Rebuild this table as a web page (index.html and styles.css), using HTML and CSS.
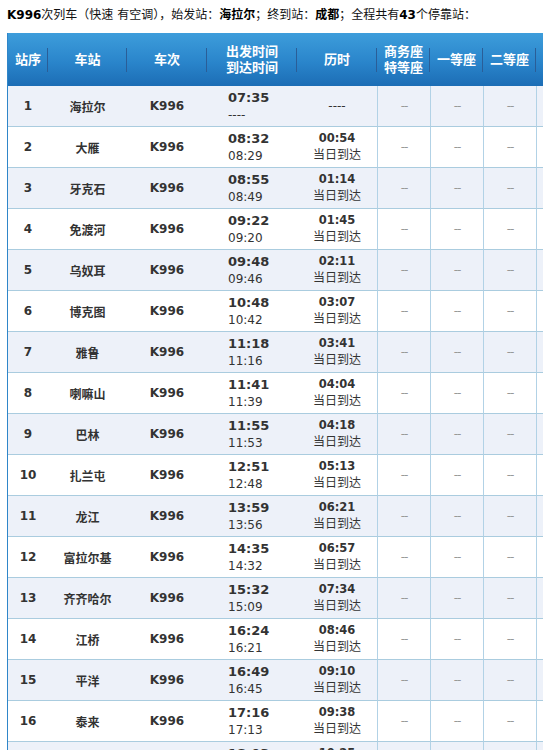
FILE: index.html
```html
<!DOCTYPE html>
<html lang="zh-CN">
<head>
<meta charset="utf-8">
<title>K996 时刻表</title>
<link rel="stylesheet" href="styles.css">
</head>
<body>
<div class="page">
  <p class="title"><b>K996</b>次列车（快速 有空调），始发站：<b>海拉尔</b>；终到站：<b>成都</b>；全程共有<b>43</b>个停靠站：</p>
  <table class="schedule">
    <colgroup>
      <col class="c-seq"><col class="c-station"><col class="c-train"><col class="c-time"><col class="c-dur">
      <col class="c-seat"><col class="c-seat"><col class="c-seat"><col class="c-seat"><col class="c-seat"><col class="c-seat"><col class="c-seat"><col class="c-seat">
    </colgroup>
    <thead>
      <tr>
        <th>站序</th><th>车站</th><th>车次</th><th>出发时间<br>到达时间</th><th>历时</th>
        <th>商务座<br>特等座</th><th>一等座</th><th>二等座</th><th>高级<br>软卧</th><th>软卧</th><th>硬卧</th><th>软座</th><th>硬座</th>
      </tr>
    </thead>
    <tbody>
      <tr><td class="seq">1</td><td class="st">海拉尔</td><td class="tr">K996</td><td class="tm"><b>07:35</b><br>----</td><td class="du">----</td><td class="se">--</td><td class="se">--</td><td class="se">--</td><td class="se">--</td><td class="se">--</td><td class="se">--</td><td class="se">--</td><td class="se">--</td></tr>
      <tr><td class="seq">2</td><td class="st">大雁</td><td class="tr">K996</td><td class="tm"><b>08:32</b><br>08:29</td><td class="du"><b>00:54</b><br>当日到达</td><td class="se">--</td><td class="se">--</td><td class="se">--</td><td class="se">--</td><td class="se">--</td><td class="se">--</td><td class="se">--</td><td class="se">--</td></tr>
      <tr><td class="seq">3</td><td class="st">牙克石</td><td class="tr">K996</td><td class="tm"><b>08:55</b><br>08:49</td><td class="du"><b>01:14</b><br>当日到达</td><td class="se">--</td><td class="se">--</td><td class="se">--</td><td class="se">--</td><td class="se">--</td><td class="se">--</td><td class="se">--</td><td class="se">--</td></tr>
      <tr><td class="seq">4</td><td class="st">免渡河</td><td class="tr">K996</td><td class="tm"><b>09:22</b><br>09:20</td><td class="du"><b>01:45</b><br>当日到达</td><td class="se">--</td><td class="se">--</td><td class="se">--</td><td class="se">--</td><td class="se">--</td><td class="se">--</td><td class="se">--</td><td class="se">--</td></tr>
      <tr><td class="seq">5</td><td class="st">乌奴耳</td><td class="tr">K996</td><td class="tm"><b>09:48</b><br>09:46</td><td class="du"><b>02:11</b><br>当日到达</td><td class="se">--</td><td class="se">--</td><td class="se">--</td><td class="se">--</td><td class="se">--</td><td class="se">--</td><td class="se">--</td><td class="se">--</td></tr>
      <tr><td class="seq">6</td><td class="st">博克图</td><td class="tr">K996</td><td class="tm"><b>10:48</b><br>10:42</td><td class="du"><b>03:07</b><br>当日到达</td><td class="se">--</td><td class="se">--</td><td class="se">--</td><td class="se">--</td><td class="se">--</td><td class="se">--</td><td class="se">--</td><td class="se">--</td></tr>
      <tr><td class="seq">7</td><td class="st">雅鲁</td><td class="tr">K996</td><td class="tm"><b>11:18</b><br>11:16</td><td class="du"><b>03:41</b><br>当日到达</td><td class="se">--</td><td class="se">--</td><td class="se">--</td><td class="se">--</td><td class="se">--</td><td class="se">--</td><td class="se">--</td><td class="se">--</td></tr>
      <tr><td class="seq">8</td><td class="st">喇嘛山</td><td class="tr">K996</td><td class="tm"><b>11:41</b><br>11:39</td><td class="du"><b>04:04</b><br>当日到达</td><td class="se">--</td><td class="se">--</td><td class="se">--</td><td class="se">--</td><td class="se">--</td><td class="se">--</td><td class="se">--</td><td class="se">--</td></tr>
      <tr><td class="seq">9</td><td class="st">巴林</td><td class="tr">K996</td><td class="tm"><b>11:55</b><br>11:53</td><td class="du"><b>04:18</b><br>当日到达</td><td class="se">--</td><td class="se">--</td><td class="se">--</td><td class="se">--</td><td class="se">--</td><td class="se">--</td><td class="se">--</td><td class="se">--</td></tr>
      <tr><td class="seq">10</td><td class="st">扎兰屯</td><td class="tr">K996</td><td class="tm"><b>12:51</b><br>12:48</td><td class="du"><b>05:13</b><br>当日到达</td><td class="se">--</td><td class="se">--</td><td class="se">--</td><td class="se">--</td><td class="se">--</td><td class="se">--</td><td class="se">--</td><td class="se">--</td></tr>
      <tr><td class="seq">11</td><td class="st">龙江</td><td class="tr">K996</td><td class="tm"><b>13:59</b><br>13:56</td><td class="du"><b>06:21</b><br>当日到达</td><td class="se">--</td><td class="se">--</td><td class="se">--</td><td class="se">--</td><td class="se">--</td><td class="se">--</td><td class="se">--</td><td class="se">--</td></tr>
      <tr><td class="seq">12</td><td class="st">富拉尔基</td><td class="tr">K996</td><td class="tm"><b>14:35</b><br>14:32</td><td class="du"><b>06:57</b><br>当日到达</td><td class="se">--</td><td class="se">--</td><td class="se">--</td><td class="se">--</td><td class="se">--</td><td class="se">--</td><td class="se">--</td><td class="se">--</td></tr>
      <tr><td class="seq">13</td><td class="st">齐齐哈尔</td><td class="tr">K996</td><td class="tm"><b>15:32</b><br>15:09</td><td class="du"><b>07:34</b><br>当日到达</td><td class="se">--</td><td class="se">--</td><td class="se">--</td><td class="se">--</td><td class="se">--</td><td class="se">--</td><td class="se">--</td><td class="se">--</td></tr>
      <tr><td class="seq">14</td><td class="st">江桥</td><td class="tr">K996</td><td class="tm"><b>16:24</b><br>16:21</td><td class="du"><b>08:46</b><br>当日到达</td><td class="se">--</td><td class="se">--</td><td class="se">--</td><td class="se">--</td><td class="se">--</td><td class="se">--</td><td class="se">--</td><td class="se">--</td></tr>
      <tr><td class="seq">15</td><td class="st">平洋</td><td class="tr">K996</td><td class="tm"><b>16:49</b><br>16:45</td><td class="du"><b>09:10</b><br>当日到达</td><td class="se">--</td><td class="se">--</td><td class="se">--</td><td class="se">--</td><td class="se">--</td><td class="se">--</td><td class="se">--</td><td class="se">--</td></tr>
      <tr><td class="seq">16</td><td class="st">泰来</td><td class="tr">K996</td><td class="tm"><b>17:16</b><br>17:13</td><td class="du"><b>09:38</b><br>当日到达</td><td class="se">--</td><td class="se">--</td><td class="se">--</td><td class="se">--</td><td class="se">--</td><td class="se">--</td><td class="se">--</td><td class="se">--</td></tr>
      <tr><td class="seq">17</td><td class="st">镇赉</td><td class="tr">K996</td><td class="tm"><b>18:03</b><br>17:59</td><td class="du"><b>10:25</b><br>当日到达</td><td class="se">--</td><td class="se">--</td><td class="se">--</td><td class="se">--</td><td class="se">--</td><td class="se">--</td><td class="se">--</td><td class="se">--</td></tr>
    </tbody>
  </table>
</div>
</body>
</html>
```

FILE: styles.css
```css
html { overflow: hidden; background: #fff; }
body {
  margin: 0;
  font-family: "DejaVu Sans", "Noto Sans CJK SC", sans-serif;
  color: #333;
}
.page { padding: 5px 0 0 7px; }
.title {
  margin: 0 0 8px;
  font-size: 12px;
  line-height: 20px;
  color: #111;
  white-space: nowrap;
}
.title b { font-weight: bold; color: #000; }

.schedule {
  border-collapse: separate;
  border-spacing: 0;
  table-layout: fixed;
  width: 794px;
  border-left: 1px solid #2f86c9;
}
.c-seq { width: 40px; }
.c-station { width: 79px; }
.c-train { width: 80px; }
.c-time { width: 90px; }
.c-dur { width: 80px; }
.c-seat { width: 53px; }

.schedule th {
  box-sizing: border-box;
  height: 53px;
  padding: 0;
  color: #fff;
  font-size: 13px;
  line-height: 16px;
  font-weight: bold;
  text-align: center;
  background:
    linear-gradient(#2a5e98, #2a5e98) right center / 1px 24px no-repeat,
    linear-gradient(#3d9ddb, #2a85cb 55%, #1c6db5);
}

.schedule td {
  box-sizing: border-box;
  height: 41px;
  padding: 0;
  text-align: center;
  border-bottom: 1px solid #aaccdf;
  font-size: 12px;
  vertical-align: middle;
}
.schedule tbody tr:nth-child(odd) td { background: #edf1f9; }
.schedule tbody tr:nth-child(even) td { background: #fff; }

.seq { font-weight: bold; font-size: 12px; }
.st { font-weight: bold; font-size: 13px; }
.tr { font-weight: bold; font-size: 12.5px; }
.tm {
  text-align: left !important;
  padding-left: 21px !important;
  line-height: 17px;
  font-size: 12px;
}
.tm b { font-size: 13px; }
.du { line-height: 17px; font-size: 12px; }
.du b { font-size: 11.5px; }
.se {
  border-left: 1px solid #b2d2e6;
  color: #999;
  font-size: 12px;
  letter-spacing: -1px;
}
```
